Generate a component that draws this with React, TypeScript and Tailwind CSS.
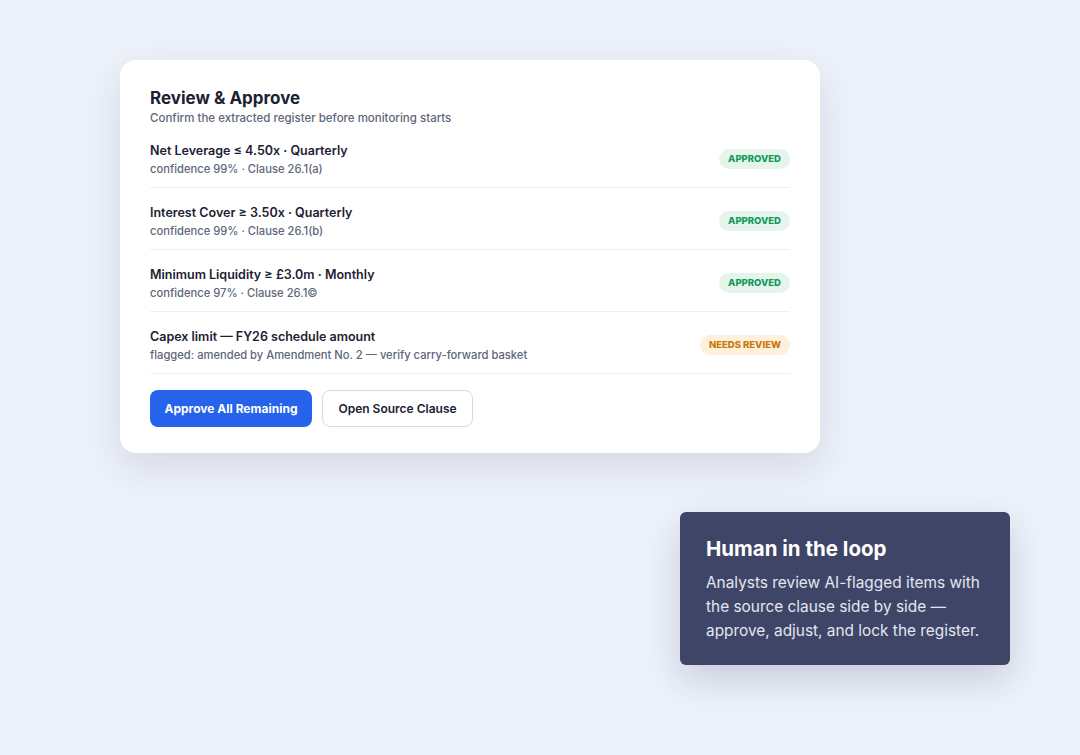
const rows = [
  { title: "Net Leverage ≤ 4.50x · Quarterly", meta: "confidence 99% · Clause 26.1(a)", status: "approved" },
  { title: "Interest Cover ≥ 3.50x · Quarterly", meta: "confidence 99% · Clause 26.1(b)", status: "approved" },
  { title: "Minimum Liquidity ≥ £3.0m · Monthly", meta: "confidence 97% · Clause 26.1©", status: "approved" },
  {
    title: "Capex limit — FY26 schedule amount",
    meta: "flagged: amended by Amendment No. 2 — verify carry-forward basket",
    status: "review",
  },
];

function StatusPill({ status }: { status: string }) {
  if (status === "review") {
    return (
      <span className="rounded-full bg-[#fdf1de] px-[9px] py-[4px] text-[9.5px] font-extrabold leading-[12px] text-[#c9780a]">
        NEEDS REVIEW
      </span>
    );
  }
  return (
    <span className="rounded-full bg-[#e5f5ec] px-[9px] py-[4px] text-[9.5px] font-extrabold leading-[12px] text-[#129a5c]">
      APPROVED
    </span>
  );
}

export default function App() {
  return (
    <div
      className="flex min-h-[755px] w-full flex-col bg-[#edf1f9] text-[#1b2232]"
      style={{ fontFamily: "Inter, 'Noto Sans', sans-serif" }}
    >
      <div className="ml-[120px] mt-[60px] w-[700px] rounded-[16px] bg-white px-[30px] pb-[26px] pt-[26px] shadow-[0_14px_40px_rgba(30,45,80,0.12)]">
        <h1 className="text-[17px] font-bold leading-[24px] text-[#1b2232]">Review &amp; Approve</h1>
        <p className="text-[11.5px] font-medium leading-[16px] text-[#5d6679]">
          Confirm the extracted register before monitoring starts
        </p>
        <div className="flex flex-col">
          {rows.map((r) => (
            <div
              key={r.title}
              className="flex items-center justify-between border-b border-[#edeff3] pb-[10px] pt-[15px]"
            >
              <div className="flex flex-col">
                <span className="text-[12.5px] font-semibold leading-[20px] text-[#1b2232]">{r.title}</span>
                <span className="text-[11.2px] font-medium leading-[16px] text-[#5d6679]">{r.meta}</span>
              </div>
              <StatusPill status={r.status} />
            </div>
          ))}
        </div>
        <div className="mt-[16px] flex gap-[10px]">
          <button className="h-[37px] w-[162px] rounded-[8px] bg-[#2563eb] text-[12px] font-bold text-white">
            Approve All Remaining
          </button>
          <button className="h-[37px] w-[151px] rounded-[8px] border border-[#d6dbe5] bg-white text-[12px] font-semibold text-[#1b2232]">
            Open Source Clause
          </button>
        </div>
      </div>

      <div className="ml-[680px] mt-[59px] w-[330px] rounded-[6px] bg-[#3f4567] px-[26px] pb-[22px] pt-[23px] shadow-[0_14px_36px_rgba(30,40,80,0.18)]">
        <h2 className="text-[20.5px] font-bold leading-[28px] text-white">Human in the loop</h2>
        <p className="mt-[8px] text-[15.4px] leading-[24px] text-[#e3e6f0]">
          Analysts review AI-flagged items with the source clause side by side — approve, adjust, and lock the register.
        </p>
      </div>
    </div>
  );
}
